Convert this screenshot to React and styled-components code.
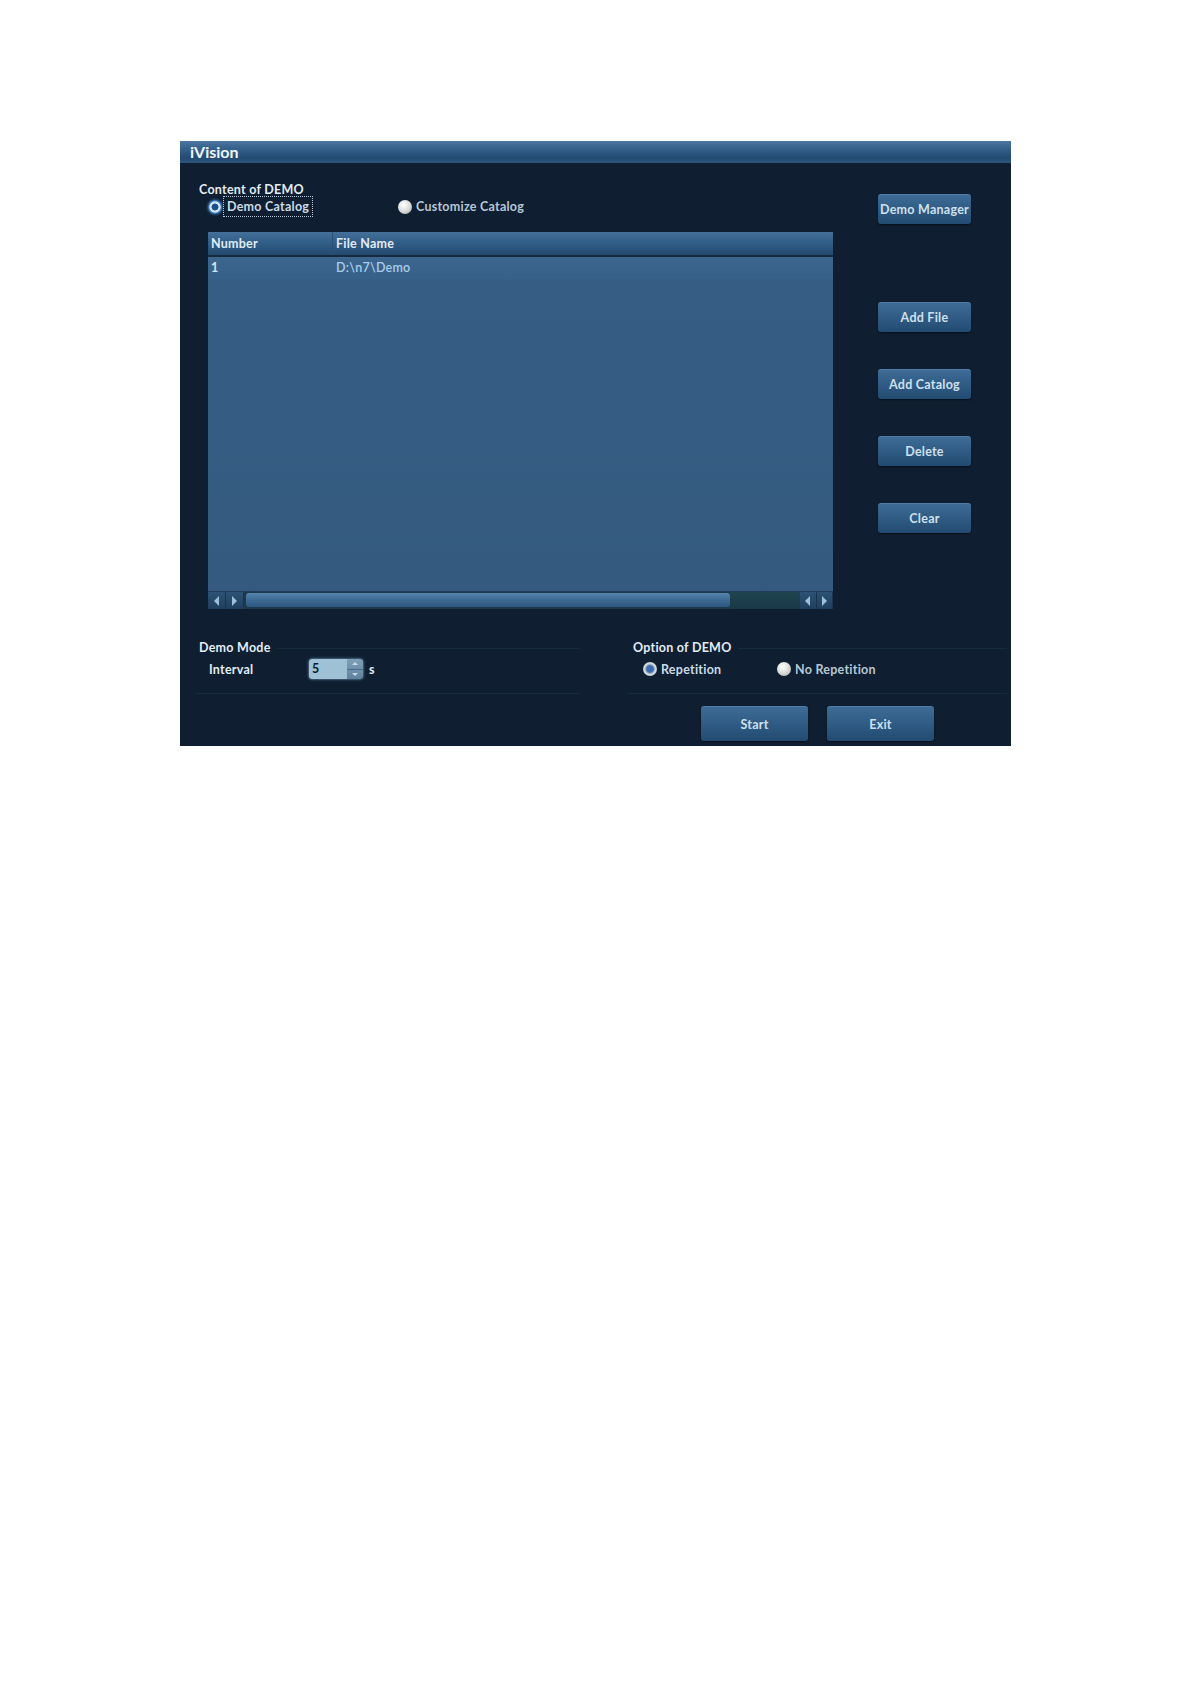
import React from "react";
import styled, { createGlobalStyle } from "styled-components";

const GlobalStyle = createGlobalStyle`
  body {
    margin: 0;
    background: #ffffff;
    font-family: Lato, "Open Sans", "Liberation Sans", sans-serif;
  }
`;

const Page = styled.div`
  padding: 141px 0 0 180px;
`;

const Window = styled.div`
  width: 831px;
  height: 605px;
  background: #0f1e31;
  display: flex;
  flex-direction: column;
  color: #d6e4f0;
  font-weight: 700;
  font-size: 12.5px;
  letter-spacing: 0.25px;
`;

const TitleBar = styled.div`
  height: 22px;
  line-height: 21px;
  padding-left: 10px;
  font-size: 16px;
  letter-spacing: 0;
  color: #eef4fa;
  background: linear-gradient(#4a76a0 0%, #34618b 35%, #244b72 75%, #2c547c 100%);
`;

const TopSection = styled.div`
  display: flex;
`;

const LeftCol = styled.div`
  width: 634px;
  padding: 20px 0 0 19px;
`;

const GroupLabel = styled.div`
  height: 14px;
  line-height: 14px;
  color: #e2ecf5;
  white-space: nowrap;
`;

const RadioRow = styled.div`
  display: flex;
  align-items: center;
  height: 19px;
  padding-left: ${(p) => p.$indent}px;
`;

const RadioItem = styled.div`
  display: flex;
  align-items: center;
  gap: 4px;
  width: ${(p) => (p.$width ? `${p.$width}px` : "auto")};
  color: ${(p) => (p.$dim ? "#b7c7d4" : "#c9dbe9")};
`;

const RadioDot = styled.span`
  display: inline-block;
  width: 14px;
  height: 14px;
  border-radius: 50%;
  box-sizing: border-box;
  background: ${(p) =>
    p.$focus
      ? "radial-gradient(circle, #1d4f8a 0 32%, #cfe4f8 38% 52%, #3f7fc4 62%, #2a66a8 100%)"
      : p.$checked
      ? "radial-gradient(circle, #3a6bb0 0 34%, #8fa6bc 42%, #d7dee4 58%, #9aa6b0 100%)"
      : "radial-gradient(circle at 40% 35%, #ffffff 0%, #e4e4e4 40%, #a8a8a8 100%)"};
  box-shadow: ${(p) => (p.$focus ? "0 0 3px #4d8fd6" : "none")};
`;

const FocusText = styled.span`
  outline: 1px dotted #b8c8d8;
  outline-offset: 2px;
  padding: 0 1px;
`;

const Table = styled.div`
  margin: 16px 0 0 9px;
  width: 625px;
  display: flex;
  flex-direction: column;
`;

const HeaderRow = styled.div`
  display: grid;
  grid-template-columns: 125px 1fr;
  height: 25px;
  background: linear-gradient(#44709a 0%, #33608a 40%, #254b70 100%);
  border-bottom: 2px solid #15293f;
  box-sizing: border-box;
`;

const HeaderCell = styled.div`
  padding-left: 3px;
  line-height: 23px;
  color: #e0ebf5;
  border-right: ${(p) => (p.$divider ? "1px solid #2a4f74" : "none")};
`;

const Body = styled.div`
  height: 334px;
  background: linear-gradient(#3a628a 0%, #365d84 8%, #345a80 100%);
`;

const DataRow = styled.div`
  display: grid;
  grid-template-columns: 125px 1fr;
  height: 22px;
  line-height: 22px;
  background: linear-gradient(#3d668e, #37608a);
`;

const Cell = styled.div`
  padding-left: ${(p) => p.$pad}px;
  color: ${(p) => p.$color};
  font-weight: ${(p) => (p.$light ? 600 : 700)};
`;

const ScrollBar = styled.div`
  height: 17px;
  display: flex;
  background: #1d3a4c;
  border-top: 1px solid #203d5a;
`;

const ArrowPair = styled.div`
  display: flex;
  width: ${(p) => p.$width}px;
  background: linear-gradient(#2d5274, #203f5e);
`;

const ArrowBtn = styled.div`
  flex: 1;
  display: flex;
  align-items: center;
  justify-content: center;
  border-right: 1px solid #1a3450;
`;

const Thumb = styled.div`
  width: 484px;
  margin: 1px 0 2px 2px;
  border-radius: 3px;
  background: linear-gradient(#5685b0 0%, #3f6c96 45%, #2c5882 100%);
`;

const Track = styled.div`
  flex: 1;
  background: linear-gradient(#1f4450, #193847);
`;

const RightCol = styled.div`
  padding: 31px 0 0 45px;
  display: flex;
  flex-direction: column;
`;

const SideButton = styled.button`
  width: 93px;
  height: 30px;
  margin-top: ${(p) => p.$top}px;
  padding: 0;
  border: none;
  border-top: 1px solid #4f7ea8;
  border-radius: 3px;
  font-family: inherit;
  font-weight: 700;
  font-size: 12.5px;
  letter-spacing: 0.25px;
  color: #cfe0ee;
  white-space: nowrap;
  background: linear-gradient(#3e6c96 0%, #2f5b84 50%, #234b71 100%);
  box-shadow: 0 1px 2px rgba(0, 0, 0, 0.5);
`;

const BottomSection = styled.div`
  display: flex;
  margin-top: 32px;
`;

const Group = styled.div`
  width: ${(p) => p.$width}px;
  margin-left: ${(p) => p.$left}px;
  padding-left: ${(p) => p.$pad}px;
  box-sizing: border-box;
  height: 53px;
  border-bottom: 1px solid #162a40;
`;

const GroupHead = styled.div`
  display: flex;
  align-items: center;
  gap: 6px;
`;

const GroupLine = styled.div`
  flex: 1;
  height: 1px;
  background: #162a40;
`;

const GroupRow = styled.div`
  display: flex;
  align-items: center;
  height: 28px;
  padding-left: ${(p) => p.$indent}px;
`;

const FieldLabel = styled.span`
  width: 100px;
  color: #e2ecf5;
`;

const SpinBox = styled.div`
  display: flex;
  width: 54px;
  height: 20px;
  border-radius: 3px;
  overflow: hidden;
  box-shadow: 0 0 3px #7fb0d0;
`;

const SpinInput = styled.div`
  flex: 1;
  padding-left: 3px;
  line-height: 20px;
  color: #0c1a28;
  background: #9ec1d6;
`;

const SpinArrows = styled.div`
  width: 16px;
  display: flex;
  flex-direction: column;
  background: linear-gradient(#7f9fb8, #5f829e);
`;

const SpinArrow = styled.div`
  flex: 1;
  display: flex;
  align-items: center;
  justify-content: center;
  border-top: ${(p) => (p.$lower ? "1px solid #4b6c88" : "none")};
`;

const Unit = styled.span`
  margin-left: 6px;
  color: #e2ecf5;
`;

const ButtonBar = styled.div`
  display: flex;
  gap: 19px;
  padding: 12px 0 0 521px;
`;

const MainButton = styled(SideButton)`
  width: 107px;
  height: 35px;
  font-size: 12.5px;
`;

const Tri = ({ dir, size = 5, color = "#9cc0dc" }) => {
  const pts =
    dir === "left"
      ? `${size},0 ${size},${size * 2} 0,${size}`
      : dir === "right"
      ? `0,0 0,${size * 2} ${size},${size}`
      : dir === "up"
      ? `0,${size} ${size * 2},${size} ${size},0`
      : `0,0 ${size * 2},0 ${size},${size}`;
  const w = dir === "left" || dir === "right" ? size : size * 2;
  const h = dir === "left" || dir === "right" ? size * 2 : size;
  return (
    <svg width={w} height={h} viewBox={`0 0 ${w} ${h}`}>
      <polygon points={pts} fill={color} />
    </svg>
  );
};

export default function App() {
  return (
    <Page>
      <GlobalStyle />
      <Window>
        <TitleBar>iVision</TitleBar>
        <TopSection>
          <LeftCol>
            <GroupLabel>Content of DEMO</GroupLabel>
            <RadioRow $indent={9}>
              <RadioItem $width={190}>
                <RadioDot $focus />
                <FocusText>Demo Catalog</FocusText>
              </RadioItem>
              <RadioItem $dim>
                <RadioDot />
                Customize Catalog
              </RadioItem>
            </RadioRow>
            <Table>
              <HeaderRow>
                <HeaderCell $divider>Number</HeaderCell>
                <HeaderCell>File Name</HeaderCell>
              </HeaderRow>
              <Body>
                <DataRow>
                  <Cell $pad={3} $color="#d4e4f0">1</Cell>
                  <Cell $pad={3} $color="#a9cde8" $light>D:\n7\Demo</Cell>
                </DataRow>
              </Body>
              <ScrollBar>
                <ArrowPair $width={36}>
                  <ArrowBtn><Tri dir="left" /></ArrowBtn>
                  <ArrowBtn><Tri dir="right" /></ArrowBtn>
                </ArrowPair>
                <Thumb />
                <Track />
                <ArrowPair $width={33}>
                  <ArrowBtn><Tri dir="left" /></ArrowBtn>
                  <ArrowBtn><Tri dir="right" /></ArrowBtn>
                </ArrowPair>
              </ScrollBar>
            </Table>
          </LeftCol>
          <RightCol>
            <SideButton $top={0}>Demo Manager</SideButton>
            <SideButton $top={78}>Add File</SideButton>
            <SideButton $top={37}>Add Catalog</SideButton>
            <SideButton $top={37}>Delete</SideButton>
            <SideButton $top={37}>Clear</SideButton>
          </RightCol>
        </TopSection>
        <BottomSection>
          <Group $width={385} $left={15} $pad={4}>
            <GroupHead>
              <GroupLabel>Demo Mode</GroupLabel>
              <GroupLine />
            </GroupHead>
            <GroupRow $indent={10}>
              <FieldLabel>Interval</FieldLabel>
              <SpinBox>
                <SpinInput>5</SpinInput>
                <SpinArrows>
                  <SpinArrow><Tri dir="up" size={3} color="#c8dbe8" /></SpinArrow>
                  <SpinArrow $lower><Tri dir="down" size={3} color="#c8dbe8" /></SpinArrow>
                </SpinArrows>
              </SpinBox>
              <Unit>s</Unit>
            </GroupRow>
          </Group>
          <Group $width={380} $left={47} $pad={6}>
            <GroupHead>
              <GroupLabel>Option of DEMO</GroupLabel>
              <GroupLine />
            </GroupHead>
            <GroupRow $indent={10}>
              <RadioItem $width={134}>
                <RadioDot $checked />
                Repetition
              </RadioItem>
              <RadioItem $dim>
                <RadioDot />
                No Repetition
              </RadioItem>
            </GroupRow>
          </Group>
        </BottomSection>
        <ButtonBar>
          <MainButton>Start</MainButton>
          <MainButton>Exit</MainButton>
        </ButtonBar>
      </Window>
    </Page>
  );
}
